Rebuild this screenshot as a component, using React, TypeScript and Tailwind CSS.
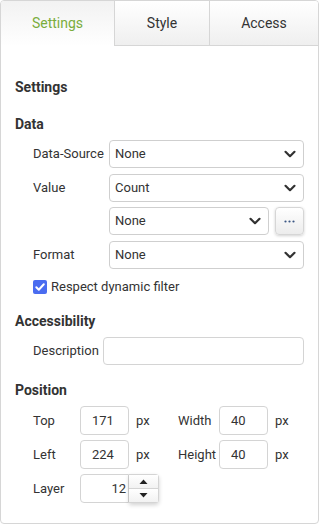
import React from "react";

const Chevron = () => (
  <svg width="14" height="14" viewBox="0 0 14 14" className="shrink-0">
    <path d="M2.5 4.8 L7 9.2 L11.5 4.8" fill="none" stroke="#333" strokeWidth="2.2" strokeLinecap="round" strokeLinejoin="round" />
  </svg>
);

const Select = ({ value, className = "" }: { value: string; className?: string }) => (
  <div className={`h-[28px] flex items-center justify-between pl-[5px] pr-[6px] border border-[#cfcfcf] rounded-[4px] bg-white text-[13px] text-[#333] ${className}`}>
    <span>{value}</span>
    <Chevron />
  </div>
);

const Header = ({ children, className = "" }: { children: React.ReactNode; className?: string }) => (
  <div className={`text-[14px] font-bold text-[#333] leading-[20px] ${className}`}>{children}</div>
);

const NumBox = ({ value }: { value: string }) => (
  <div className="w-[49px] h-[29px] border border-[#d4d4d4] rounded-[4px] flex items-center pl-[11px] text-[13px] text-[#333] bg-white">{value}</div>
);

export default function App() {
  return (
    <div className="w-[321px] h-[525px] bg-white" style={{ fontFamily: "Roboto, 'Liberation Sans', sans-serif" }}>
      <div className="w-[319px] h-[524px] border border-[#d6d6d6] rounded-[4px] overflow-hidden flex flex-col">
        <div className="h-[45px] flex text-[14px] shrink-0">
          <div className="w-[114px] flex items-center justify-center text-[#7aad3c] border-r border-[#d6d6d6] bg-gradient-to-b from-[#f2f2f2] to-white">Settings</div>
          <div className="w-[95px] flex items-center justify-center text-[#333] border-r border-b border-[#d6d6d6] bg-gradient-to-b from-white to-[#efefef]">Style</div>
          <div className="flex-1 flex items-center justify-center text-[#333] border-b border-[#d6d6d6] bg-gradient-to-b from-white to-[#efefef]">Access</div>
        </div>
        <div className="pl-[14px] pr-[14px] pt-[31px] text-[13px] text-[#333]">
          <Header>Settings</Header>
          <Header className="mt-[17px]">Data</Header>
          <div className="mt-[6px] pl-[18px] flex flex-col">
            <div className="flex items-center">
              <div className="w-[76px]">Data-Source</div>
              <Select value="None" className="flex-1" />
            </div>
            <div className="flex items-center mt-[6px]">
              <div className="w-[76px]">Value</div>
              <Select value="Count" className="flex-1" />
            </div>
            <div className="flex items-center mt-[5px]">
              <div className="w-[76px]"></div>
              <Select value="None" className="flex-1" />
              <div className="ml-[6px] w-[29px] h-[28px] border border-[#d6d6d6] rounded-[4px] bg-gradient-to-b from-white to-[#ececec] shadow-[0_1px_3px_rgba(0,0,0,0.18)] flex items-center justify-center">
                <svg width="11" height="3" viewBox="0 0 11 3">
                  <circle cx="1.5" cy="1.5" r="1.1" fill="#3b5683" />
                  <circle cx="5.5" cy="1.5" r="1.1" fill="#3b5683" />
                  <circle cx="9.5" cy="1.5" r="1.1" fill="#3b5683" />
                </svg>
              </div>
            </div>
            <div className="flex items-center mt-[6px]">
              <div className="w-[76px]">Format</div>
              <Select value="None" className="flex-1" />
            </div>
            <div className="flex items-center mt-[11px] h-[14px]">
              <div className="w-[14px] h-[14px] rounded-[2px] bg-[#4a6cf0] flex items-center justify-center">
                <svg width="12" height="12" viewBox="0 0 12 12">
                  <path d="M2.3 6.2 L4.8 8.7 L9.8 3.3" fill="none" stroke="white" strokeWidth="2" strokeLinecap="round" strokeLinejoin="round" />
                </svg>
              </div>
              <span className="ml-[4px] text-[13px]">Respect dynamic filter</span>
            </div>
          </div>
          <Header className="mt-[17px]">Accessibility</Header>
          <div className="mt-[6px] pl-[18px] flex items-center">
            <div className="w-[70px]">Description</div>
            <div className="flex-1 h-[28px] border border-[#d4d4d4] rounded-[4px]"></div>
          </div>
          <Header className="mt-[15px]">Position</Header>
          <div className="mt-[6px] pl-[18px] flex flex-col gap-[5px]">
            <div className="flex items-center">
              <div className="w-[47px]">Top</div>
              <NumBox value="171" />
              <div className="ml-[7px] w-[42px]">px</div>
              <div className="w-[41px]">Width</div>
              <NumBox value="40" />
              <div className="ml-[7px]">px</div>
            </div>
            <div className="flex items-center">
              <div className="w-[47px]">Left</div>
              <NumBox value="224" />
              <div className="ml-[7px] w-[42px]">px</div>
              <div className="w-[41px]">Height</div>
              <NumBox value="40" />
              <div className="ml-[7px]">px</div>
            </div>
            <div className="flex items-center">
              <div className="w-[47px]">Layer</div>
              <div className="w-[49px] h-[29px] border border-[#d4d4d4] rounded-l-[4px] flex items-center justify-end pr-[2px] bg-white">12</div>
              <div className="w-[30px] h-[29px] border border-l-0 border-[#d4d4d4] rounded-r-[4px] flex flex-col shadow-[0_2px_4px_rgba(0,0,0,0.18)] bg-white">
                <div className="flex-1 flex items-center justify-center border-b border-[#d4d4d4] bg-gradient-to-b from-white to-[#f2f2f2]">
                  <svg width="9" height="5" viewBox="0 0 9 5"><path d="M0.5 5 L4.5 0.5 L8.5 5 Z" fill="#222" /></svg>
                </div>
                <div className="flex-1 flex items-center justify-center bg-gradient-to-b from-white to-[#f2f2f2]">
                  <svg width="9" height="5" viewBox="0 0 9 5"><path d="M0.5 0 L4.5 4.5 L8.5 0 Z" fill="#222" /></svg>
                </div>
              </div>
            </div>
          </div>
        </div>
      </div>
    </div>
  );
}
